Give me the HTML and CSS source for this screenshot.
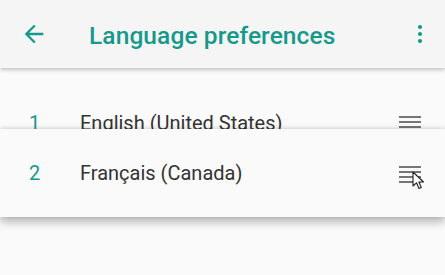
FILE: index.html
```html
<!DOCTYPE html>
<html>
<head>
<meta charset="utf-8">
<link rel="stylesheet" href="styles.css">
</head>
<body>
<header class="appbar">
  <svg class="back" width="28" height="28" viewBox="0 0 24 24"><path d="M20 11H7.83l5.59-5.59L12 4l-8 8 8 8 1.41-1.41L7.83 13H20v-2z" fill="#16998a"/></svg>
  <h1 class="title">Language preferences</h1>
  <svg class="more" width="24" height="24" viewBox="0 0 24 24"><circle cx="12" cy="5" r="2.1" fill="#16998a"/><circle cx="12" cy="12" r="2.1" fill="#16998a"/><circle cx="12" cy="19" r="2.1" fill="#16998a"/></svg>
</header>
<main class="list">
  <div class="row">
    <span class="num">1</span>
    <span class="label">English (United States)</span>
    <span class="handle"><i></i><i></i><i></i><i></i></span>
  </div>
  <div class="row dragging">
    <span class="num">2</span>
    <span class="label">Français (Canada)</span>
    <span class="handle"><i></i><i></i><i></i><i></i></span>
    <svg class="cursor" width="14" height="20" viewBox="0 0 14 20"><path d="M1 1 L1 15 L4.5 11.8 L7 17.5 L9.3 16.5 L6.9 11 L11.5 11 Z" fill="#fff" stroke="#222" stroke-width="1.1" stroke-linejoin="round"/></svg>
  </div>
</main>
</body>
</html>
```
FILE: styles.css
```css
* { box-sizing: border-box; }
html, body { margin: 0; padding: 0; }
body {
  width: 445px;
  height: 275px;
  overflow: hidden;
  background: #fafafa;
  font-family: Roboto, "Noto Sans", sans-serif;
}
.appbar {
  position: relative;
  z-index: 2;
  height: 68px;
  background: #f5f5f5;
  box-shadow: 0 2px 4px rgba(0,0,0,0.22);
  display: flex;
  align-items: center;
  padding: 0 13px 0 20px;
}
.back { width: 28px; height: 28px; flex: none; }
.title {
  margin: 2px 0 0 41px;
  flex: 1;
  font-size: 24.5px;
  font-weight: 500;
  color: #16998a;
  letter-spacing: 0.1px;
}
.more { width: 24px; height: 24px; flex: none; }
.list {
  padding-top: 11px;
}
.row {
  position: relative;
  height: 88px;
  display: flex;
  align-items: center;
  padding: 0 24px 0 29px;
  background: #fafafa;
}
.num {
  width: 51px;
  font-size: 20px;
  color: #16998a;
}
.label {
  flex: 1;
  font-size: 20px;
  color: #333;
}
.handle {
  width: 22px;
  display: flex;
  flex-direction: column;
  gap: 3px;
  margin-top: 3px;
}
.handle i {
  display: block;
  height: 2px;
  background: #757575;
}
.dragging {
  top: -38px;
  z-index: 1;
  box-shadow: 0 5px 9px rgba(0,0,0,0.28), 0 -1px 4px rgba(0,0,0,0.12);
}
.cursor {
  position: absolute;
  left: 412px;
  top: 42px;
}
```
